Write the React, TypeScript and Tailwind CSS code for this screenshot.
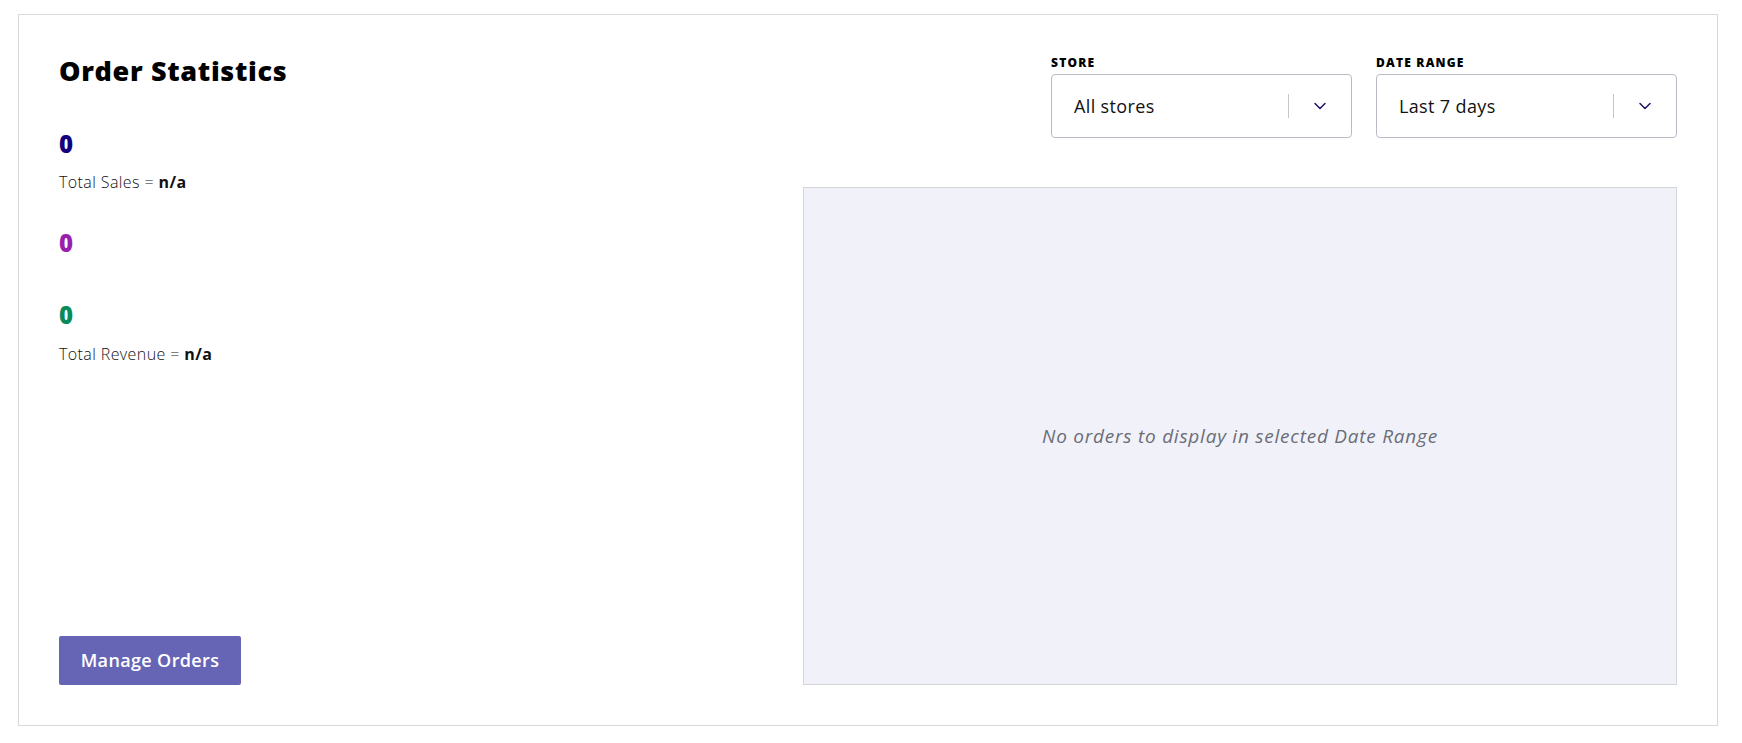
import { ChevronDown } from "lucide-react";

const font = { fontFamily: "'Open Sans', 'Noto Sans', sans-serif" };

function Select({ label, value }: { label: string; value: string }) {
  return (
    <div className="w-[301px]">
      <p className="mb-[3px] text-[12px] font-extrabold uppercase leading-4 tracking-[0.1em] text-black">
        {label}
      </p>
      <div className="flex h-16 items-center rounded-[4px] border border-[#b9bcc4] bg-white pl-[22px] pr-[21px]">
        <span className="flex-1 text-[18px] tracking-[0.02em] text-[#111]">{value}</span>
        <span className="h-6 w-px bg-[#c4c6cc]" />
        <ChevronDown className="ml-[21px] text-[#1b1464]" size={20} strokeWidth={1.8} />
      </div>
    </div>
  );
}

export default function App() {
  return (
    <div className="min-h-screen bg-white px-[18px] pt-[14px]" style={font}>
      <div className="flex h-[712px] w-[1700px] border border-[#d9d9dc] px-10 pb-10 pt-10">
        {/* stats column */}
        <div className="flex w-[744px] flex-col justify-between">
          <div>
            <h2 className="text-[27px] font-extrabold leading-8 tracking-[0.025em] text-black">Order Statistics</h2>

            <p className="mt-[41px] text-[24px] font-extrabold leading-8 text-[#12007f]">0</p>
            <p className="mt-[10px] text-[16px] font-light leading-6 tracking-[0.025em] text-[#111]">
              Total Sales = <span className="font-bold">n/a</span>
            </p>

            <p className="mt-[33px] text-[24px] font-extrabold leading-8 text-[#9b1fae]">0</p>

            <p className="mt-[40px] text-[24px] font-extrabold leading-8 text-[#078a5c]">0</p>
            <p className="mt-[11px] text-[16px] font-light leading-6 tracking-[0.025em] text-[#111]">
              Total Revenue = <span className="font-bold">n/a</span>
            </p>
          </div>

          <button className="h-[49px] w-[182px] rounded-[2px] bg-[#6665b5] text-[18px] font-semibold tracking-[0.02em] text-white">
            Manage Orders
          </button>
        </div>

        {/* filters + chart */}
        <div className="flex flex-1 flex-col">
          <div className="flex justify-end gap-6">
            <Select label="Store" value="All stores" />
            <Select label="Date Range" value="Last 7 days" />
          </div>
          <div className="mt-[49px] flex flex-1 items-center justify-center border border-[#d5d6db] bg-[#f1f2f9]">
            <p className="text-[19px] italic tracking-[0.04em] text-[#6b6c78]">
              No orders to display in selected Date Range
            </p>
          </div>
        </div>
      </div>
    </div>
  );
}
